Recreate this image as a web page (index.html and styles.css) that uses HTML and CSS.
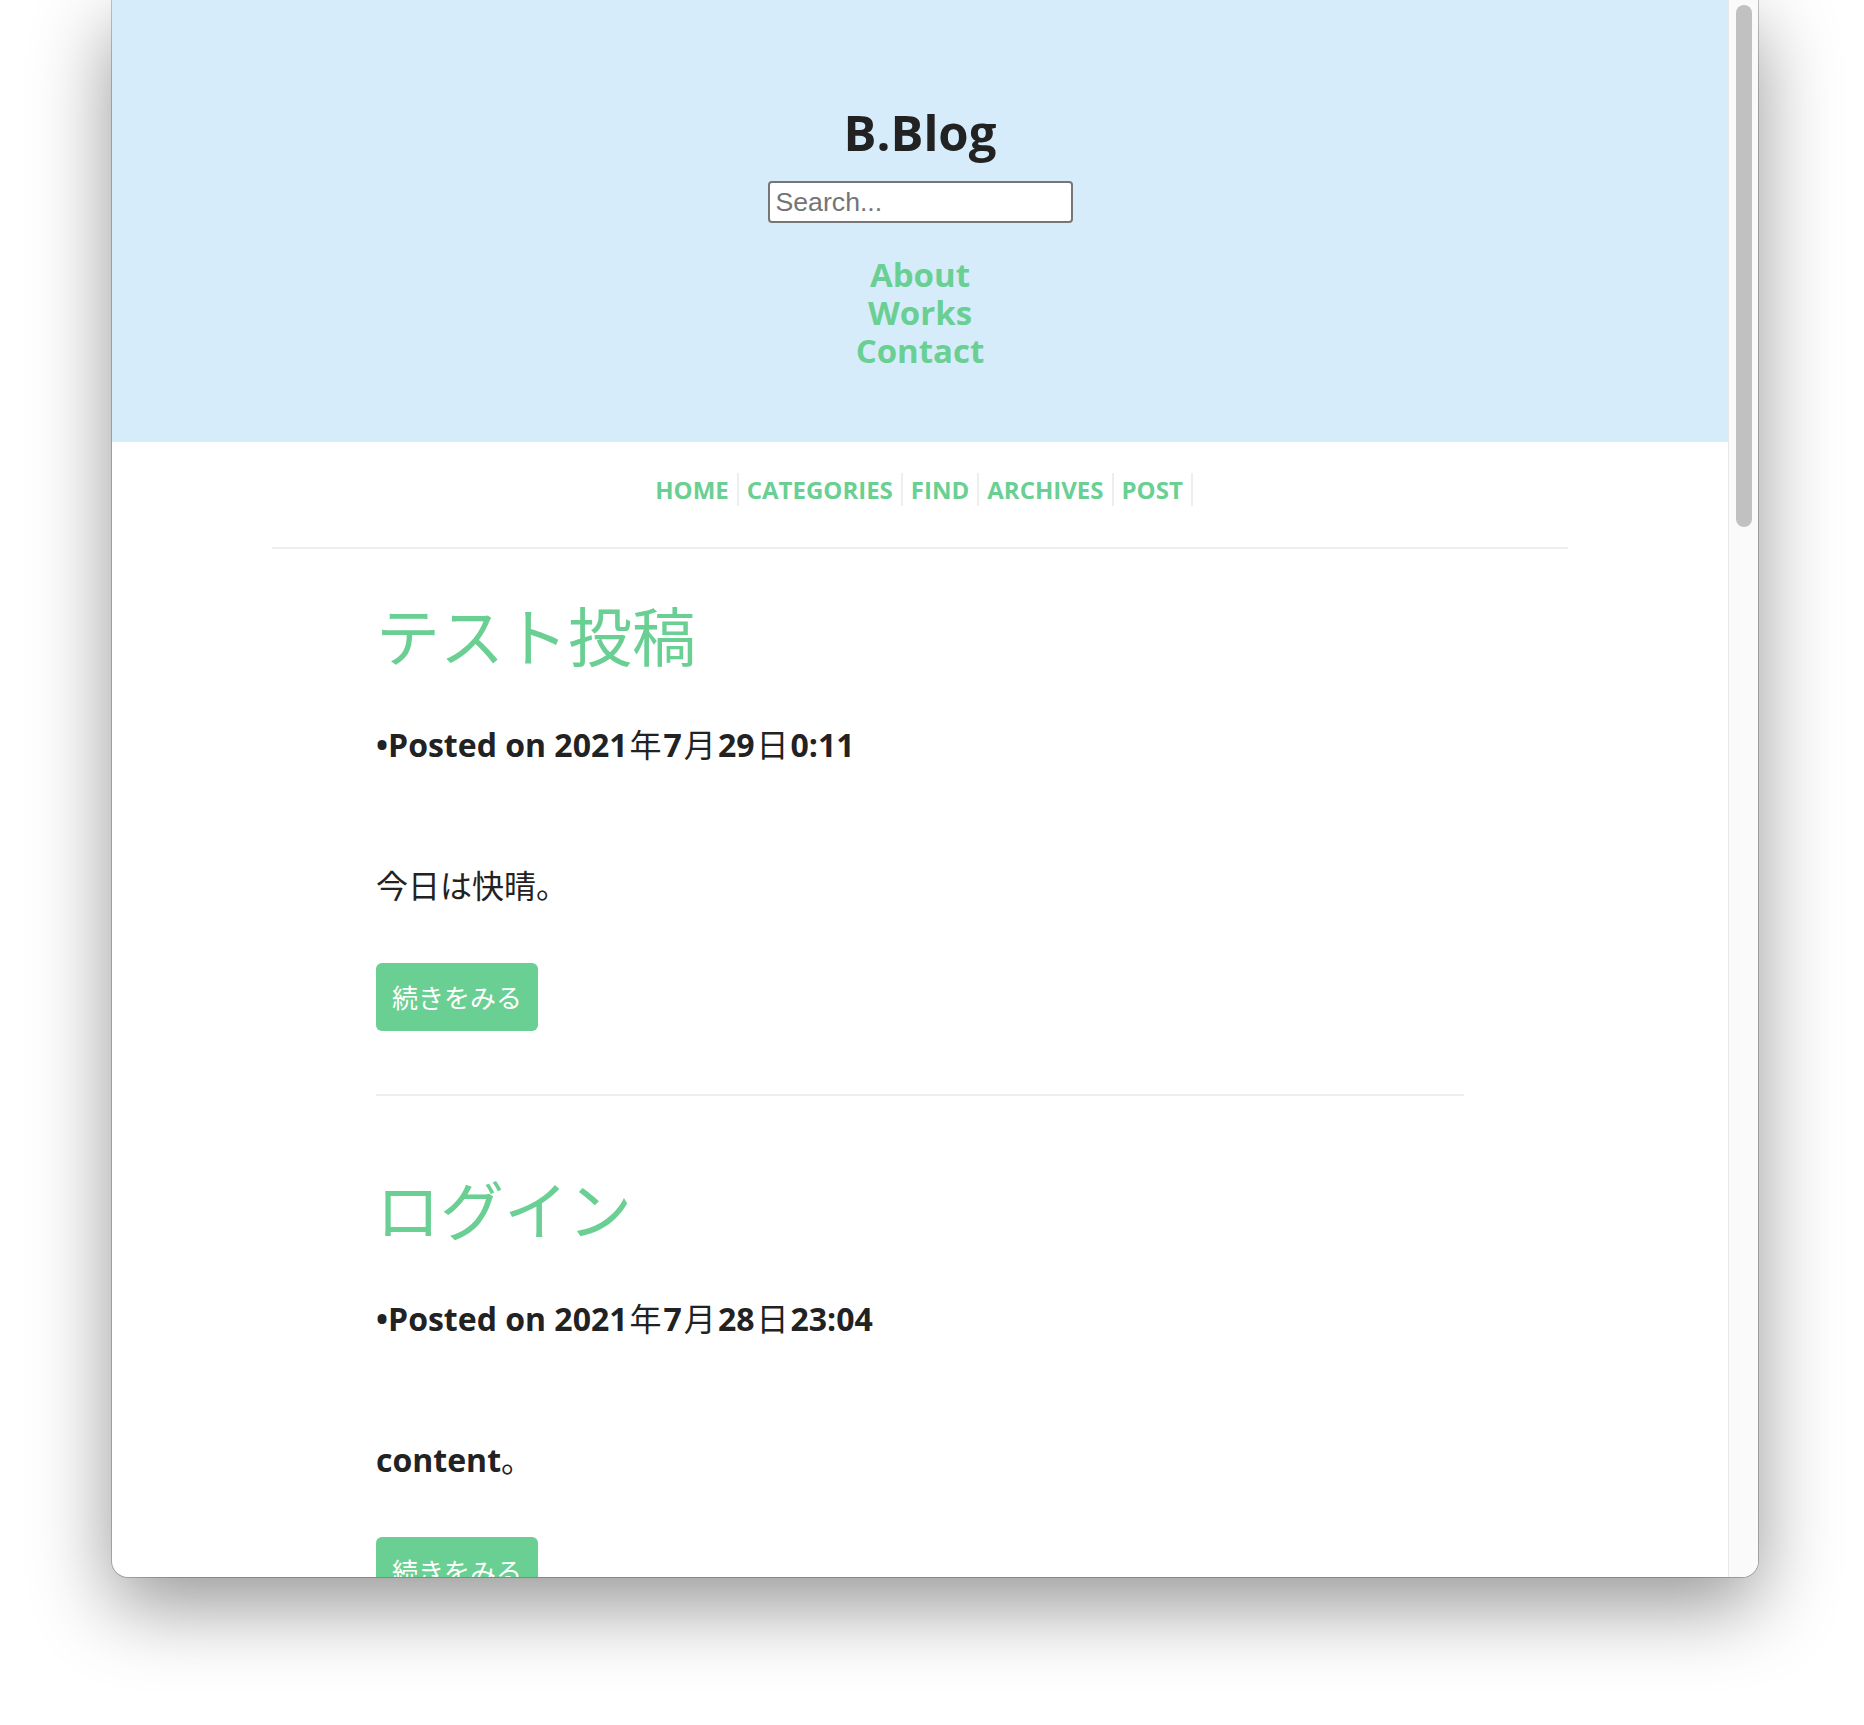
FILE: index.html
```html
<!DOCTYPE html>
<html lang="ja">
<head>
<meta charset="utf-8">
<title>B.Blog</title>
<link rel="stylesheet" href="styles.css">
</head>
<body>
<div class="desktop">
  <div class="window">
    <div class="viewport">
      <header class="site-header">
        <h1 class="logo">B.Blog</h1>
        <input class="search" type="text" placeholder="Search...">
        <ul class="links">
          <li><a href="#">About</a></li>
          <li><a href="#">Works</a></li>
          <li><a href="#">Contact</a></li>
        </ul>
      </header>
      <nav class="menu">
        <ul class="menu-list">
          <li><a href="#">HOME</a></li>
          <li><a href="#">CATEGORIES</a></li>
          <li><a href="#">FIND</a></li>
          <li><a href="#">ARCHIVES</a></li>
          <li><a href="#">POST</a></li>
        </ul>
      </nav>
      <main class="posts">
        <article class="post">
          <h2 class="post-title"><a href="#">テスト投稿</a></h2>
          <p class="post-meta">•Posted on 2021<span class="cjk">年</span>7<span class="cjk">月</span>29<span class="cjk">日</span>0:11</p>
          <p class="post-body">今日は快晴。</p>
          <a class="more" href="#">続きをみる</a>
        </article>
        <article class="post">
          <h2 class="post-title"><a href="#">ログイン</a></h2>
          <p class="post-meta">•Posted on 2021<span class="cjk">年</span>7<span class="cjk">月</span>28<span class="cjk">日</span>23:04</p>
          <p class="post-body"><strong>content</strong>。</p>
          <a class="more" href="#">続きをみる</a>
        </article>
      </main>
    </div>
    <div class="scrollbar"><div class="thumb"></div></div>
  </div>
</div>
</body>
</html>
```

FILE: styles.css
```css
html, body {
  margin: 0;
  padding: 0;
  background: #ffffff;
}
body {
  width: 1864px;
  height: 1725px;
  overflow: hidden;
  font-family: "Open Sans", "Noto Sans CJK JP", sans-serif;
  color: #222222;
}
.desktop {
  padding-left: 112px;
}
.window {
  width: 1646px;
  height: 1577px;
  display: flex;
  overflow: hidden;
  background: #ffffff;
  border-radius: 0 0 16px 16px;
  box-shadow: 0 0 0 1px rgba(0, 0, 0, 0.22), 0 28px 80px rgba(0, 0, 0, 0.42);
}
.viewport {
  width: 1616px;
  flex: none;
  overflow: hidden;
}
.scrollbar {
  width: 29px;
  flex: none;
  background: #fafafa;
  border-left: 1px solid #e8e8e8;
  padding-top: 5px;
}
.thumb {
  width: 16px;
  height: 522px;
  margin-left: 7px;
  border-radius: 8px;
  background: #c1c1c1;
}

/* header */
.site-header {
  background: #d6ecfb;
  display: flex;
  flex-direction: column;
  align-items: center;
  padding: 99px 0 72px;
}
.logo {
  margin: 0;
  font-size: 49px;
  line-height: 66px;
  font-weight: 700;
  color: #222222;
}
.search {
  margin-top: 16px;
  width: 305px;
  height: 42px;
  box-sizing: border-box;
  border: 2px solid #767676;
  border-radius: 4px;
  padding: 0 6px;
  font-family: "Liberation Sans", Arial, sans-serif;
  font-size: 26.67px;
  background: #ffffff;
  color: #222222;
}
.search::placeholder {
  color: #757575;
}
.links {
  list-style: none;
  margin: 33px 0 0;
  padding: 0;
  text-align: center;
}
.links li {
  font-size: 33px;
  line-height: 38px;
  font-weight: 700;
}
.links a {
  color: #6acf92;
  text-decoration: none;
}

/* menu */
.menu {
  width: 1296px;
  margin: 31px auto 0;
  padding-bottom: 41px;
  border-bottom: 2px solid #eeeeee;
}
.menu-list {
  list-style: none;
  margin: 0;
  padding: 0;
  display: flex;
  justify-content: center;
}
.menu-list li {
  padding: 0 8px;
  border-right: 2px solid #eeeeee;
  font-size: 24px;
  font-weight: 700;
}
.menu-list a {
  color: #6acf92;
  text-decoration: none;
}

/* posts */
.posts {
  width: 1088px;
  margin: 0 auto;
}
.post {
  padding: 71px 0 63px;
  border-bottom: 2px solid #eeeeee;
}
.post:first-child {
  padding-top: 44px;
}
.post-title {
  margin: 0;
  font-family: "Noto Sans CJK JP", sans-serif;
  font-size: 64px;
  line-height: 80px;
  font-weight: 400;
}
.post-title a {
  color: #6acf92;
  text-decoration: none;
}
.post-meta {
  margin: 50px 0 0;
  font-size: 32px;
  line-height: 44px;
  font-weight: 700;
  color: #222222;
}
.cjk {
  font-weight: 400;
  margin: 0 2px;
}
.post-body {
  margin: 97px 0 0;
  font-size: 32px;
  line-height: 44px;
  color: #222222;
}
.post-body strong {
  font-weight: 700;
}
.more {
  display: inline-block;
  margin-top: 55px;
  height: 68px;
  line-height: 68px;
  padding: 0 16px;
  border-radius: 6px;
  background: #6acf92;
  color: #ffffff;
  font-family: "Noto Sans CJK JP", sans-serif;
  font-size: 26px;
  text-decoration: none;
}
```
